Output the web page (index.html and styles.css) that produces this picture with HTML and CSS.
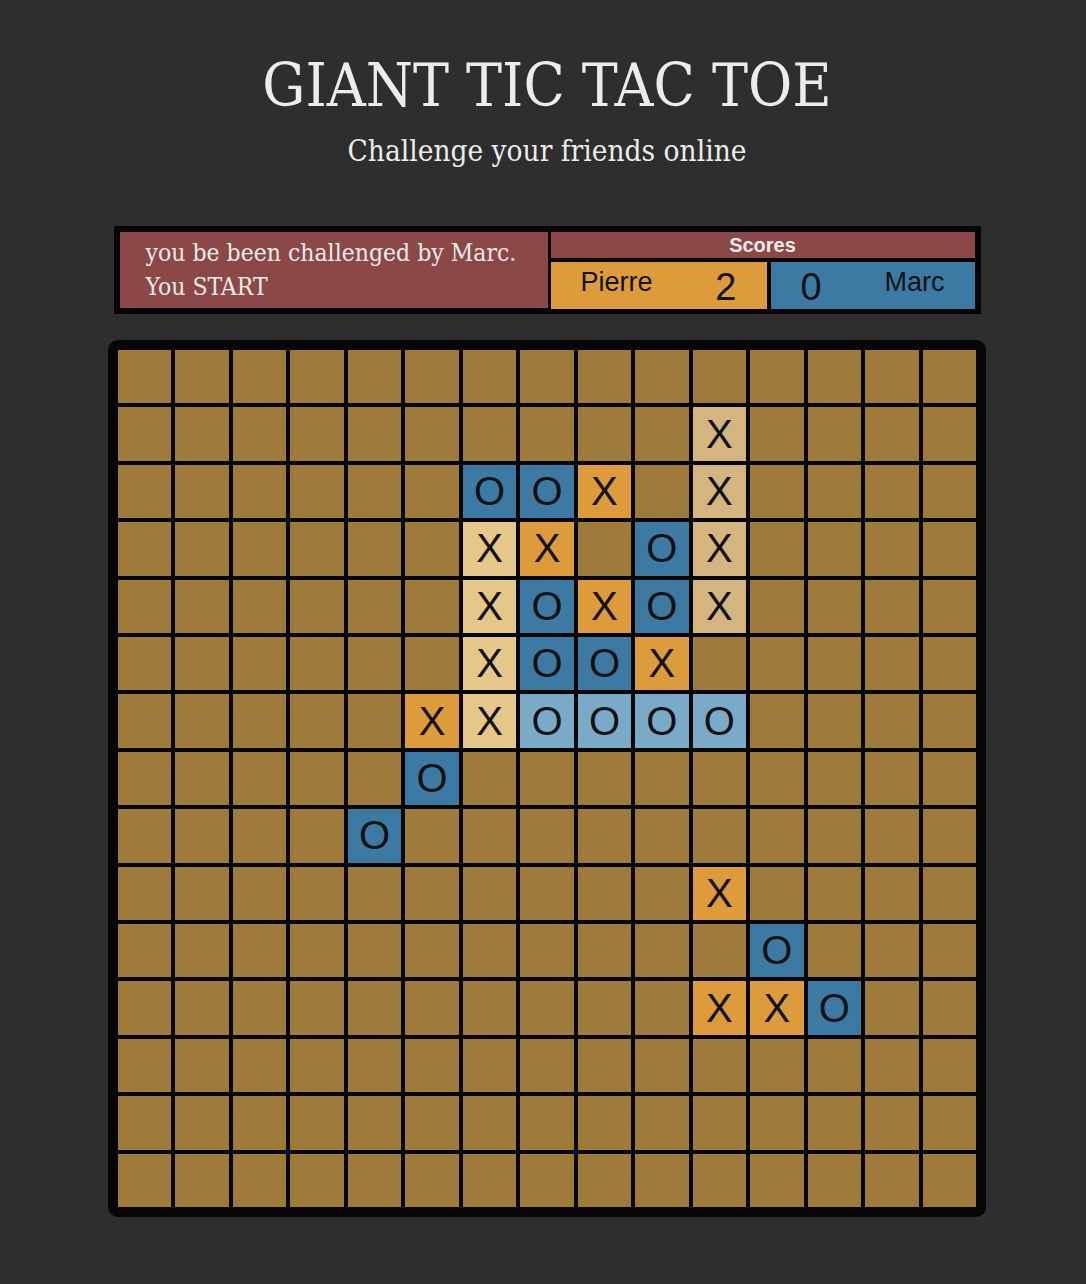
FILE: index.html
```html
<!DOCTYPE html>
<html>
<head>
<meta charset="utf-8">
<title>Giant Tic Tac Toe</title>
<link rel="stylesheet" href="styles.css">
</head>
<body>
<div class="page">
  <header class="header">
    <h1 class="title">GIANT TIC TAC TOE</h1>
    <p class="subtitle">Challenge your friends online</p>
  </header>

  <section class="info">
    <div class="message">you be been challenged by Marc.<br>You START</div>
    <div class="scores">
      <div class="scores-head">Scores</div>
      <div class="scores-row">
        <div class="player player-x"><span class="pname">Pierre</span><span class="pscore">2</span></div>
        <div class="player player-o"><span class="pscore">0</span><span class="pname">Marc</span></div>
      </div>
    </div>
  </section>

  <main class="board">
    <!-- row 1 -->
    <div class="cell"></div><div class="cell"></div><div class="cell"></div><div class="cell"></div><div class="cell"></div><div class="cell"></div><div class="cell"></div><div class="cell"></div><div class="cell"></div><div class="cell"></div><div class="cell"></div><div class="cell"></div><div class="cell"></div><div class="cell"></div><div class="cell"></div>
    <!-- row 2 -->
    <div class="cell"></div><div class="cell"></div><div class="cell"></div><div class="cell"></div><div class="cell"></div><div class="cell"></div><div class="cell"></div><div class="cell"></div><div class="cell"></div><div class="cell"></div><div class="cell xw">X</div><div class="cell"></div><div class="cell"></div><div class="cell"></div><div class="cell"></div>
    <!-- row 3 -->
    <div class="cell"></div><div class="cell"></div><div class="cell"></div><div class="cell"></div><div class="cell"></div><div class="cell"></div><div class="cell o">O</div><div class="cell o">O</div><div class="cell x">X</div><div class="cell"></div><div class="cell xw">X</div><div class="cell"></div><div class="cell"></div><div class="cell"></div><div class="cell"></div>
    <!-- row 4 -->
    <div class="cell"></div><div class="cell"></div><div class="cell"></div><div class="cell"></div><div class="cell"></div><div class="cell"></div><div class="cell xh">X</div><div class="cell x">X</div><div class="cell"></div><div class="cell o">O</div><div class="cell xw">X</div><div class="cell"></div><div class="cell"></div><div class="cell"></div><div class="cell"></div>
    <!-- row 5 -->
    <div class="cell"></div><div class="cell"></div><div class="cell"></div><div class="cell"></div><div class="cell"></div><div class="cell"></div><div class="cell xh">X</div><div class="cell o">O</div><div class="cell x">X</div><div class="cell o">O</div><div class="cell xw">X</div><div class="cell"></div><div class="cell"></div><div class="cell"></div><div class="cell"></div>
    <!-- row 6 -->
    <div class="cell"></div><div class="cell"></div><div class="cell"></div><div class="cell"></div><div class="cell"></div><div class="cell"></div><div class="cell xh">X</div><div class="cell o">O</div><div class="cell o">O</div><div class="cell x">X</div><div class="cell"></div><div class="cell"></div><div class="cell"></div><div class="cell"></div><div class="cell"></div>
    <!-- row 7 -->
    <div class="cell"></div><div class="cell"></div><div class="cell"></div><div class="cell"></div><div class="cell"></div><div class="cell x">X</div><div class="cell xh">X</div><div class="cell oh">O</div><div class="cell oh">O</div><div class="cell oh">O</div><div class="cell oh">O</div><div class="cell"></div><div class="cell"></div><div class="cell"></div><div class="cell"></div>
    <!-- row 8 -->
    <div class="cell"></div><div class="cell"></div><div class="cell"></div><div class="cell"></div><div class="cell"></div><div class="cell o">O</div><div class="cell"></div><div class="cell"></div><div class="cell"></div><div class="cell"></div><div class="cell"></div><div class="cell"></div><div class="cell"></div><div class="cell"></div><div class="cell"></div>
    <!-- row 9 -->
    <div class="cell"></div><div class="cell"></div><div class="cell"></div><div class="cell"></div><div class="cell o">O</div><div class="cell"></div><div class="cell"></div><div class="cell"></div><div class="cell"></div><div class="cell"></div><div class="cell"></div><div class="cell"></div><div class="cell"></div><div class="cell"></div><div class="cell"></div>
    <!-- row 10 -->
    <div class="cell"></div><div class="cell"></div><div class="cell"></div><div class="cell"></div><div class="cell"></div><div class="cell"></div><div class="cell"></div><div class="cell"></div><div class="cell"></div><div class="cell"></div><div class="cell x">X</div><div class="cell"></div><div class="cell"></div><div class="cell"></div><div class="cell"></div>
    <!-- row 11 -->
    <div class="cell"></div><div class="cell"></div><div class="cell"></div><div class="cell"></div><div class="cell"></div><div class="cell"></div><div class="cell"></div><div class="cell"></div><div class="cell"></div><div class="cell"></div><div class="cell"></div><div class="cell o">O</div><div class="cell"></div><div class="cell"></div><div class="cell"></div>
    <!-- row 12 -->
    <div class="cell"></div><div class="cell"></div><div class="cell"></div><div class="cell"></div><div class="cell"></div><div class="cell"></div><div class="cell"></div><div class="cell"></div><div class="cell"></div><div class="cell"></div><div class="cell x">X</div><div class="cell x">X</div><div class="cell o">O</div><div class="cell"></div><div class="cell"></div>
    <!-- row 13 -->
    <div class="cell"></div><div class="cell"></div><div class="cell"></div><div class="cell"></div><div class="cell"></div><div class="cell"></div><div class="cell"></div><div class="cell"></div><div class="cell"></div><div class="cell"></div><div class="cell"></div><div class="cell"></div><div class="cell"></div><div class="cell"></div><div class="cell"></div>
    <!-- row 14 -->
    <div class="cell"></div><div class="cell"></div><div class="cell"></div><div class="cell"></div><div class="cell"></div><div class="cell"></div><div class="cell"></div><div class="cell"></div><div class="cell"></div><div class="cell"></div><div class="cell"></div><div class="cell"></div><div class="cell"></div><div class="cell"></div><div class="cell"></div>
    <!-- row 15 -->
    <div class="cell"></div><div class="cell"></div><div class="cell"></div><div class="cell"></div><div class="cell"></div><div class="cell"></div><div class="cell"></div><div class="cell"></div><div class="cell"></div><div class="cell"></div><div class="cell"></div><div class="cell"></div><div class="cell"></div><div class="cell"></div><div class="cell"></div>
  </main>
</div>
</body>
</html>
```

FILE: styles.css
```css
html, body {
  margin: 0;
  padding: 0;
  background: #2e2e2e;
}

body {
  padding-left: 8px;
  font-family: "Liberation Sans", Arial, sans-serif;
}

.page {
  display: flex;
  flex-direction: column;
  align-items: center;
  padding-top: 45px;
}

.header {
  text-align: center;
  color: #ececec;
  font-family: "DejaVu Serif", "Liberation Serif", serif;
  font-stretch: condensed;
}

.title {
  margin: 0;
  font-size: 60px;
  font-weight: normal;
  line-height: 80px;
}

.subtitle {
  margin: 6px 0 0;
  font-size: 29.5px;
  line-height: 40px;
}

.info {
  margin-top: 55px;
  width: 867px;
  box-sizing: border-box;
  border: 6px solid #060606;
  background: #060606;
  display: flex;
  gap: 3px;
}

.message {
  width: 428px;
  background: #8b4846;
  color: #ececec;
  font-family: "DejaVu Serif", "Liberation Serif", serif;
  font-stretch: condensed;
  font-size: 24.5px;
  line-height: 34px;
  padding: 4px 0 4px 26px;
  box-sizing: border-box;
}

.scores {
  flex: 1;
  display: flex;
  flex-direction: column;
  gap: 4px;
}

.scores-head {
  height: 26px;
  background: #8b4846;
  color: #ececec;
  font-weight: bold;
  font-size: 20px;
  line-height: 26px;
  text-align: center;
}

.scores-row {
  height: 46px;
  display: grid;
  grid-template-columns: 216px 1fr;
  gap: 4px;
}

.player {
  display: flex;
  align-items: center;
  justify-content: space-between;
  padding: 0 30px;
  color: #111;
}

.player-x { background: #de9b3c; }
.player-o { background: #3d7aa3; }

.pname {
  font-size: 27px;
  margin-top: -6px;
}

.pscore {
  font-size: 38px;
  margin-top: 4px;
}

.board {
  margin-top: 26px;
  width: 878px;
  height: 877px;
  box-sizing: border-box;
  padding: 10px;
  background: #060606;
  border-radius: 10px;
  display: grid;
  grid-template-columns: repeat(15, 1fr);
  grid-template-rows: repeat(15, 1fr);
  gap: 4px;
}

.cell {
  background: #9e7b3b;
  display: flex;
  align-items: center;
  justify-content: center;
  font-size: 40px;
  color: #111;
}

.cell.x { background: #de9b3c; }
.cell.o { background: #3d7aa3; }
.cell.xh { background: #e6c689; }
.cell.xw { background: #d5b57f; }
.cell.oh { background: #7aaac8; }
```
